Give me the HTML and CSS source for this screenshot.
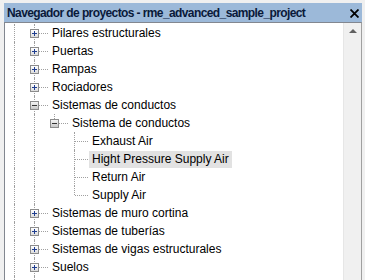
FILE: index.html
```
<!DOCTYPE html>
<html lang="es">
<head>
  <meta charset="UTF-8">
  <title>Navegador de proyectos</title>
  <link rel="stylesheet" href="styles.css">
</head>
<body>

<div class="panel">
  <div class="title-bar">
    <span class="title">Navegador de proyectos - rme_advanced_sample_project</span>
    <svg class="close" width="9" height="9" viewBox="0 0 9 9">
      <path d="M0.5 0.5 L8.5 8.5 M8.5 0.5 L0.5 8.5" stroke="#000" stroke-width="1.8"/>
    </svg>
  </div>

  <div class="content">
    <div class="tree">
      <div class="row"><span class="g g0"></span><span class="c"><i class="box plus"></i></span><span class="label">Pilares estructurales</span></div>
      <div class="row"><span class="g g0"></span><span class="c"><i class="box plus"></i></span><span class="label">Puertas</span></div>
      <div class="row"><span class="g g0"></span><span class="c"><i class="box plus"></i></span><span class="label">Rampas</span></div>
      <div class="row"><span class="g g0"></span><span class="c"><i class="box plus"></i></span><span class="label">Rociadores</span></div>
      <div class="row"><span class="g g0"></span><span class="c"><i class="box minus"></i></span><span class="label">Sistemas de conductos</span></div>
      <div class="row"><span class="g g0"></span><span class="g"></span><span class="c last"><i class="box minus"></i></span><span class="label">Sistema de conductos</span></div>
      <div class="row"><span class="g g0"></span><span class="g"></span><span class="g empty"></span><span class="c"></span><span class="label">Exhaust Air</span></div>
      <div class="row"><span class="g g0"></span><span class="g"></span><span class="g empty"></span><span class="c"></span><span class="label selected">Hight Pressure Supply Air</span></div>
      <div class="row"><span class="g g0"></span><span class="g"></span><span class="g empty"></span><span class="c"></span><span class="label">Return Air</span></div>
      <div class="row"><span class="g g0"></span><span class="g"></span><span class="g empty"></span><span class="c last"></span><span class="label">Supply Air</span></div>
      <div class="row"><span class="g g0"></span><span class="c"><i class="box plus"></i></span><span class="label">Sistemas de muro cortina</span></div>
      <div class="row"><span class="g g0"></span><span class="c"><i class="box plus"></i></span><span class="label">Sistemas de tuberías</span></div>
      <div class="row"><span class="g g0"></span><span class="c"><i class="box plus"></i></span><span class="label">Sistemas de vigas estructurales</span></div>
      <div class="row"><span class="g g0"></span><span class="c"><i class="box plus"></i></span><span class="label">Suelos</span></div>
      <div class="row"><span class="g g0"></span><span class="c"></span><span class="label"></span></div>
    </div>
    <div class="scrollbar">
      <span class="arrow-up"></span>
    </div>
  </div>
</div>

</body>
</html>
```

FILE: styles.css
```
body {
  margin: 0;
  background: #f0f0f0;
  font-family: "Liberation Sans", Arial, sans-serif;
  font-size: 12px;
  color: #000;
  overflow: hidden;
}
.panel {
  margin: 3px 3px 0 4px;
  height: 277px;
  display: flex;
  flex-direction: column;
}
.title-bar {
  height: 19px;
  background: #9cb9d9;
  display: flex;
  align-items: center;
  justify-content: space-between;
  padding: 0 3px 0 3px;
}
.title {
  font-weight: bold;
  letter-spacing: -0.6px;
  color: #0a1a3a;
}
.close {
  display: block;
  margin-top: 1px;
}
.content {
  flex: 1;
  display: flex;
  background: #fff;
  border-top: 1px solid #828790;
  border-left: 1px solid #828790;
  border-right: 1px solid #a0a0a0;
  overflow: hidden;
}
.tree {
  flex: 1;
  padding-top: 1px;
}
.row {
  display: flex;
  height: 18px;
  align-items: center;
}

/* guias verticales */
.g, .c {
  position: relative;
  flex: none;
  width: 20px;
  height: 18px;
}
.g0 {
  width: 19px;
}
.g::before, .c::before {
  content: "";
  position: absolute;
  left: 10px;
  top: 0;
  bottom: 0;
  border-left: 1px dotted #a0a0a0;
}
.g0::before {
  left: 9px;
}
.g.empty::before {
  display: none;
}
.c {
  width: 25px;
}
.c.last::before {
  bottom: 9px;
}
.c::after {
  content: "";
  position: absolute;
  left: 11px;
  width: 13px;
  top: 9px;
  border-top: 1px dotted #a0a0a0;
}

/* cajas + / - */
.box {
  position: absolute;
  z-index: 1;
  left: 6px;
  top: 5px;
  width: 7px;
  height: 7px;
  border: 1px solid #8c8c8c;
  background: linear-gradient(#ffffff, #dcdcdc);
}
.box::before {
  content: "";
  position: absolute;
  left: 1px;
  top: 3px;
  width: 5px;
  height: 1px;
  background: #1f3d8f;
}
.box.plus::after {
  content: "";
  position: absolute;
  left: 3px;
  top: 1px;
  width: 1px;
  height: 5px;
  background: #1f3d8f;
}
.box.minus {
  background: linear-gradient(#f4f4f4, #c8c8c8);
}
.box.minus::before {
  background: #333;
}

.label {
  padding: 0 3px;
  line-height: 17px;
  white-space: nowrap;
}
.label.selected {
  background: #e2e2e2;
}

.scrollbar {
  width: 17px;
  flex: none;
  background: #f0f0f0;
  border-left: 1px solid #e6e6e6;
  display: flex;
  justify-content: center;
}
.arrow-up {
  margin-top: 6px;
  width: 0;
  height: 0;
  border-left: 4px solid transparent;
  border-right: 4px solid transparent;
  border-bottom: 4px solid #606060;
}
```
